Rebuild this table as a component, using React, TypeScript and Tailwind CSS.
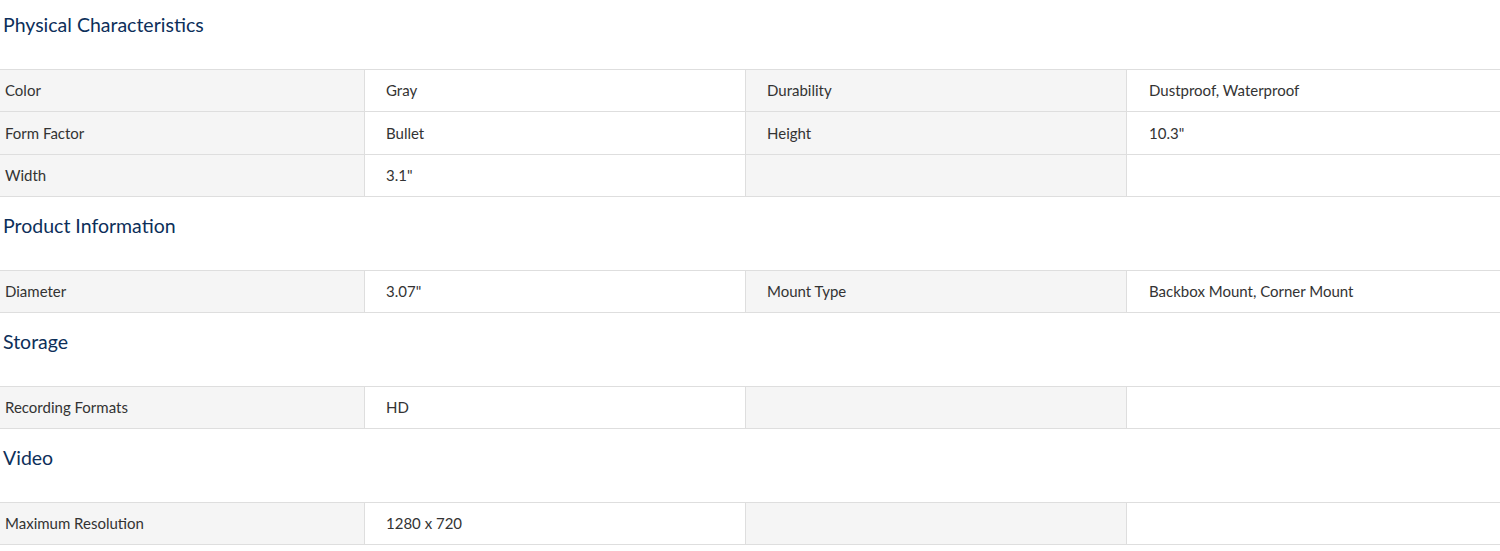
import React from "react";

type Row = [string, string, string, string];
type Section = { title: string; rows: Row[] };

const sections: Section[] = [
  {
    title: "Physical Characteristics",
    rows: [
      ["Color", "Gray", "Durability", "Dustproof, Waterproof"],
      ["Form Factor", "Bullet", "Height", '10.3"'],
      ["Width", '3.1"', "", ""],
    ],
  },
  {
    title: "Product Information",
    rows: [["Diameter", '3.07"', "Mount Type", "Backbox Mount, Corner Mount"]],
  },
  { title: "Storage", rows: [["Recording Formats", "HD", "", ""]] },
  { title: "Video", rows: [["Maximum Resolution", "1280 x 720", "", ""]] },
];

export default function App() {
  return (
    <div
      className="w-[1500px] bg-white text-[#333]"
      style={{ fontFamily: "Lato, 'Open Sans', sans-serif" }}
    >
      {sections.map((s, i) => (
        <div key={s.title}>
          <div
            className={`flex items-start px-[3px] text-[19.5px] leading-[26px] text-[#0d2f5a] ${
              i === 0 ? "h-[69px] pt-[12px]" : "h-[73px] pt-[16px]"
            }`}
          >
            {s.title}
          </div>
          <div className="border-b border-[#dedede]">
            {s.rows.map((r, j) => (
              <div
                key={j}
                className={`grid grid-cols-[365px_381px_381px_1fr] border-t border-[#dedede] text-[15px] ${
                  i === 0 && j === 1 ? "h-[43px]" : "h-[42px]"
                }`}
              >
                <div className="flex items-center border-r border-[#dedede] bg-[#f5f5f5] pl-[5px]">
                  {r[0]}
                </div>
                <div className="flex items-center border-r border-[#dedede] bg-white pl-[21px]">
                  {r[1]}
                </div>
                <div className="flex items-center border-r border-[#dedede] bg-[#f5f5f5] pl-[21px]">
                  {r[2]}
                </div>
                <div className="flex items-center bg-white pl-[22px]">{r[3]}</div>
              </div>
            ))}
          </div>
        </div>
      ))}
    </div>
  );
}
